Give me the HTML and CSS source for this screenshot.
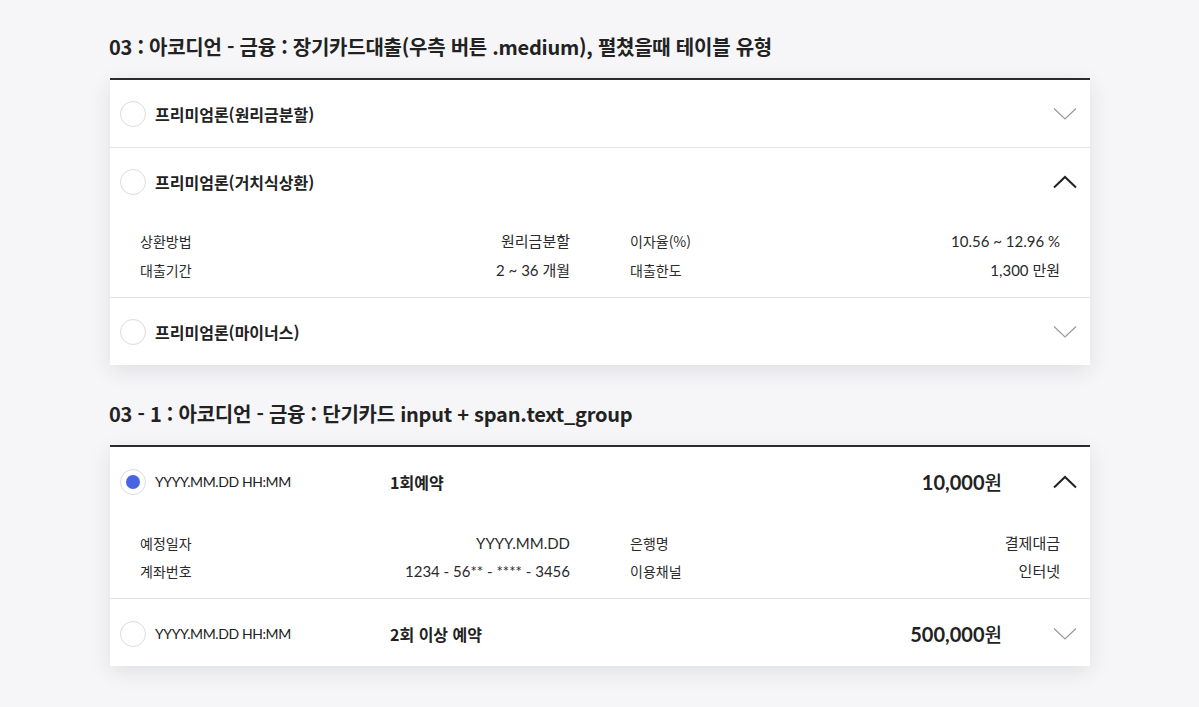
FILE: index.html
```html
<!DOCTYPE html>
<html lang="ko">
<head>
<meta charset="utf-8">
<title>아코디언</title>
<link rel="stylesheet" href="styles.css">
</head>
<body>
<main class="page">
  <section class="block">
    <h2 class="block-title">03 : 아코디언 - 금융 : 장기카드대출(우측 버튼 .medium), 펼쳤을때 테이블 유형</h2>
    <div class="accordion loan">
      <div class="item">
        <div class="head">
          <span class="radio"></span>
          <span class="label">프리미엄론(원리금분할)</span>
          <svg class="chev chev-down" width="24" height="14" viewBox="0 0 24 14"><polyline points="1,1.5 12,12 23,1.5" fill="none" stroke="#9a9a9a" stroke-width="1.2"/></svg>
        </div>
      </div>
      <div class="item open">
        <div class="head">
          <span class="radio"></span>
          <span class="label">프리미엄론(거치식상환)</span>
          <svg class="chev chev-up" width="24" height="14" viewBox="0 0 24 14"><polyline points="1,12.5 12,2 23,12.5" fill="none" stroke="#222" stroke-width="2"/></svg>
        </div>
        <div class="detail">
          <dl class="col">
            <div class="pair"><dt>상환방법</dt><dd>원리금분할</dd></div>
            <div class="pair"><dt>대출기간</dt><dd>2 ~ 36 개월</dd></div>
          </dl>
          <dl class="col">
            <div class="pair"><dt>이자율(%)</dt><dd>10.56 ~ 12.96 %</dd></div>
            <div class="pair"><dt>대출한도</dt><dd>1,300 만원</dd></div>
          </dl>
        </div>
      </div>
      <div class="item">
        <div class="head">
          <span class="radio"></span>
          <span class="label">프리미엄론(마이너스)</span>
          <svg class="chev chev-down" width="24" height="14" viewBox="0 0 24 14"><polyline points="1,1.5 12,12 23,1.5" fill="none" stroke="#9a9a9a" stroke-width="1.2"/></svg>
        </div>
      </div>
    </div>
  </section>

  <section class="block">
    <h2 class="block-title">03 - 1 : 아코디언 - 금융 : 단기카드 input + span.text_group</h2>
    <div class="accordion card">
      <div class="item open">
        <div class="head">
          <span class="radio checked"></span>
          <span class="date">YYYY.MM.DD HH:MM</span>
          <span class="kind">1회예약</span>
          <span class="amount">10,000<span class="won">원</span></span>
          <svg class="chev chev-up" width="24" height="14" viewBox="0 0 24 14"><polyline points="1,12.5 12,2 23,12.5" fill="none" stroke="#222" stroke-width="2"/></svg>
        </div>
        <div class="detail">
          <dl class="col">
            <div class="pair"><dt>예정일자</dt><dd>YYYY.MM.DD</dd></div>
            <div class="pair"><dt>계좌번호</dt><dd>1234 - 56** - **** - 3456</dd></div>
          </dl>
          <dl class="col">
            <div class="pair"><dt>은행명</dt><dd>결제대금</dd></div>
            <div class="pair"><dt>이용채널</dt><dd>인터넷</dd></div>
          </dl>
        </div>
      </div>
      <div class="item">
        <div class="head">
          <span class="radio"></span>
          <span class="date">YYYY.MM.DD HH:MM</span>
          <span class="kind">2회 이상 예약</span>
          <span class="amount">500,000<span class="won">원</span></span>
          <svg class="chev chev-down" width="24" height="14" viewBox="0 0 24 14"><polyline points="1,1.5 12,12 23,1.5" fill="none" stroke="#9a9a9a" stroke-width="1.2"/></svg>
        </div>
      </div>
    </div>
  </section>
</main>
</body>
</html>
```

FILE: styles.css
```css
* { box-sizing: border-box; }
html, body { margin: 0; padding: 0; }
body {
  background: #f6f6f8;
  font-family: Lato, "Noto Sans CJK KR", sans-serif;
  color: #222;
  width: 1199px;
  height: 707px;
  overflow: hidden;
}
.page {
  padding: 33px 109px 0 110px;
  display: flex;
  flex-direction: column;
  gap: 35px;
}
.block-title {
  margin: 0 0 17px -1px;
  font-family: "Noto Sans CJK KR", sans-serif;
  font-size: 20px;
  font-weight: 700;
  line-height: 28px;
  color: #222;
  letter-spacing: -0.25px;
}
.accordion {
  background: #fff;
  border-top: 2px solid #2b2b2b;
  box-shadow: 0 6px 20px rgba(30, 35, 60, 0.1);
}
.item + .item { border-top: 1px solid #e2e2e2; }
.head {
  height: 67px;
  display: flex;
  align-items: center;
  padding: 0 13px 0 10px;
}
.card .head { padding-top: 2px; }
.radio {
  width: 26px;
  height: 26px;
  border-radius: 50%;
  border: 1px solid #dcdcdc;
  background: #fff;
  flex: none;
  display: flex;
  align-items: center;
  justify-content: center;
  margin-right: 9px;
}
.radio.checked::after {
  content: "";
  width: 14px;
  height: 14px;
  border-radius: 50%;
  background: #4665e2;
}
.label {
  flex: 1;
  font-family: "Noto Sans CJK KR", sans-serif;
  font-size: 16px;
  font-weight: 700;
  color: #222;
}
.date {
  width: 235px;
  flex: none;
  font-size: 14px;
  letter-spacing: -0.4px;
  color: #222;
}
.kind {
  flex: 1;
  font-family: "Noto Sans CJK KR", sans-serif;
  font-size: 16px;
  font-weight: 700;
}
.amount {
  font-size: 20px;
  font-weight: 700;
  margin-right: 51px;
  color: #222;
}
.won {
  font-family: "Noto Sans CJK KR", sans-serif;
  font-weight: 500;
  font-size: 19px;
}
.chev { flex: none; display: block; }
.detail {
  display: grid;
  grid-template-columns: 430px 430px;
  column-gap: 60px;
  padding: 12px 30px 12px 30px;
}
.card .detail { padding: 15px 30px 13px 30px; }
.col { margin: 0; }
.pair {
  display: flex;
  justify-content: space-between;
  line-height: 29px;
  font-size: 14px;
  color: #2a2a2a;
}
.card .pair { line-height: 28px; }
.pair dt { font-family: "Noto Sans CJK KR", sans-serif; }
.pair dd { margin: 0; font-size: 15px; font-family: Lato, "Noto Sans CJK KR", sans-serif; }
```
